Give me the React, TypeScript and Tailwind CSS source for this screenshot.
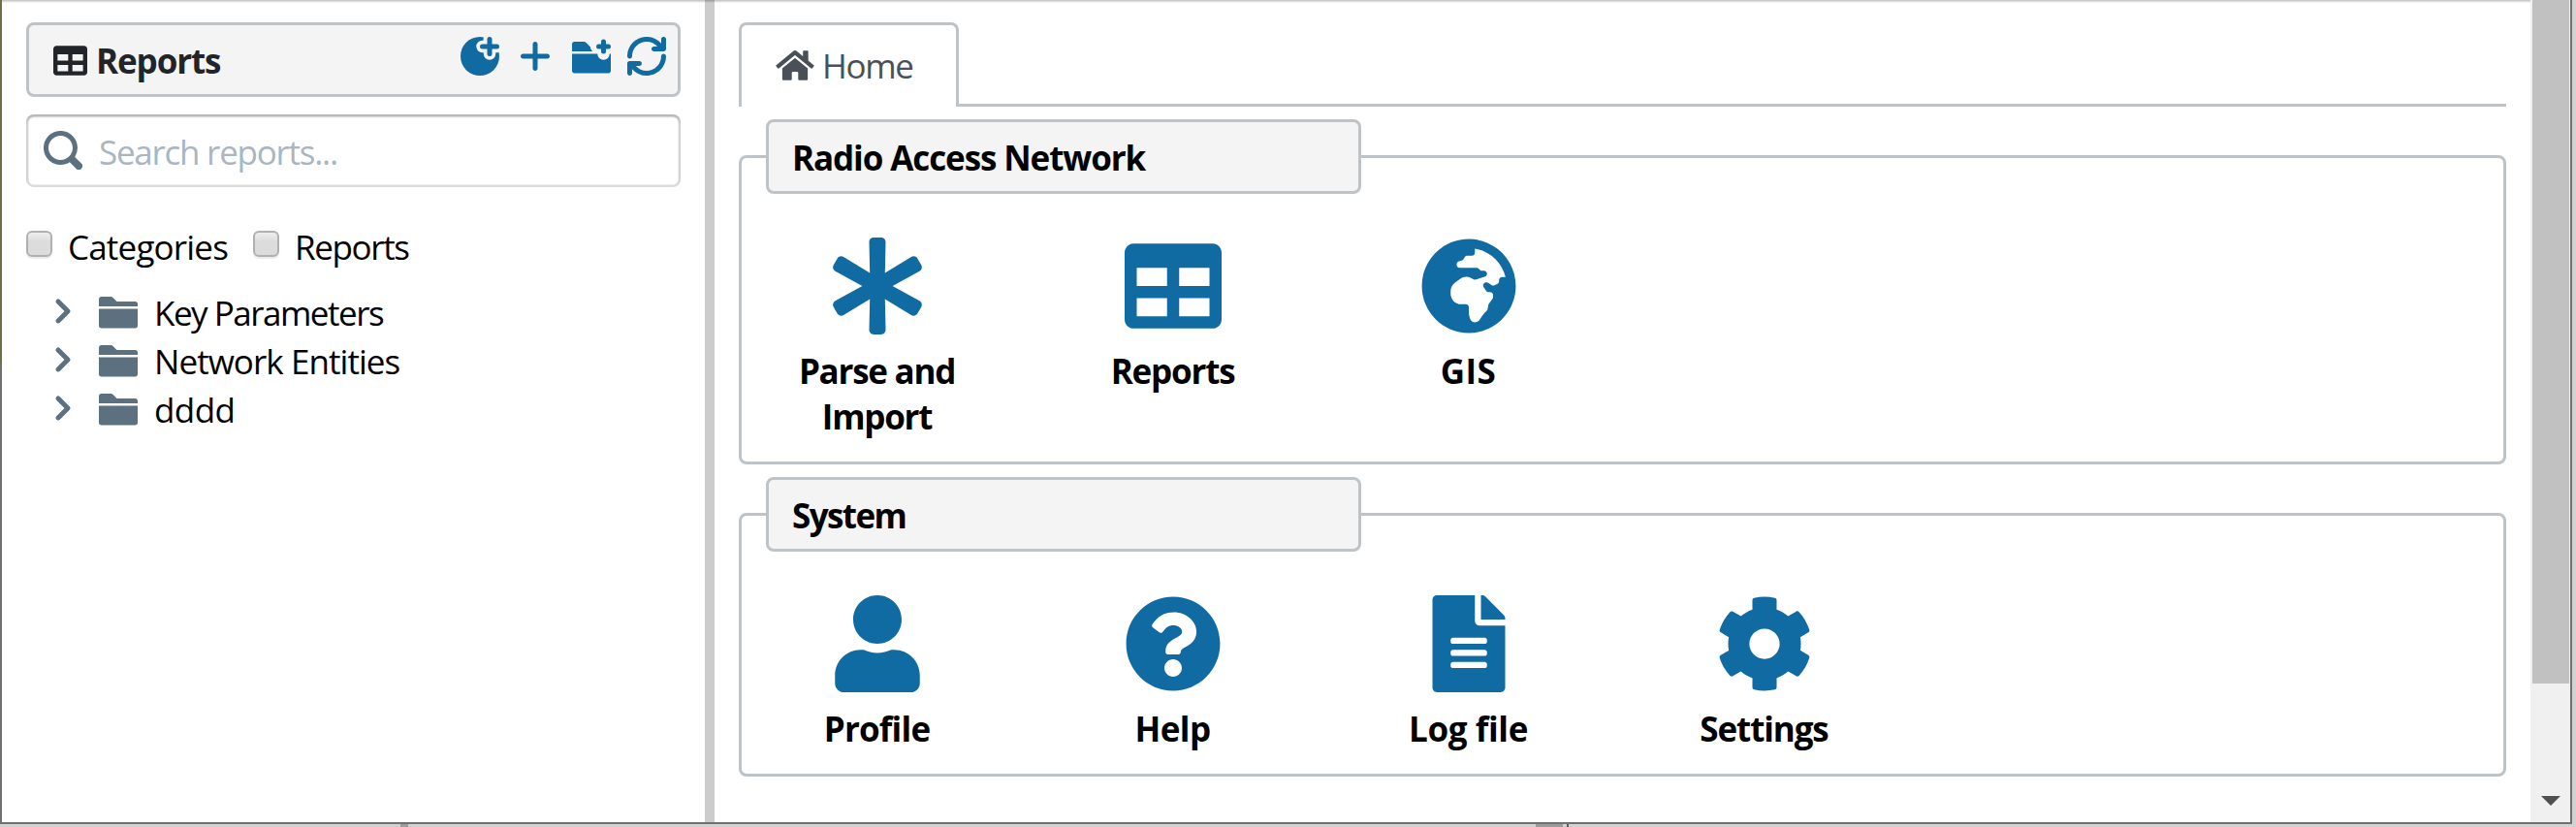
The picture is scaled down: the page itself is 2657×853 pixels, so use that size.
import type { ReactNode } from "react";
import {
  FaAsterisk,
  FaCog,
  FaFileAlt,
  FaGlobeAfrica,
  FaHome,
  FaQuestionCircle,
  FaTable,
  FaUser,
} from "react-icons/fa";

function Glyph({ d, className }: { d: string; className?: string }) {
  return (
    <svg viewBox="0 0 16 16" fill="currentColor" fillRule="evenodd" className={`block size-10 shrink-0 ${className ?? ""}`}>
      <path d={d} />
    </svg>
  );
}

const CHEVRON =
  "M10.71 7.29l-4-4a1.003 1.003 0 00-1.42 1.42L8.59 8 5.3 11.29c-.19.18-.3.43-.3.71a1.003 1.003 0 001.71.71l4-4c.18-.18.29-.43.29-.71 0-.28-.11-.53-.29-.71z";
const FOLDER =
  "M0 14c0 .55.45 1 1 1h14c.55 0 1-.45 1-1V7H0v7zm15-10H7.41L5.7 2.3A.965.965 0 005 2H1c-.55 0-1 .45-1 1v3h16V5c0-.55-.45-1-1-1z";
const PLUS =
  "M13 7H9V3c0-.55-.45-1-1-1s-1 .45-1 1v4H3c-.55 0-1 .45-1 1s.45 1 1 1h4v4c0 .55.45 1 1 1s1-.45 1-1V9h4c.55 0 1-.45 1-1s-.45-1-1-1z";
const REFRESH =
  "M14.99 6.99c-.55 0-1 .45-1 1 0 3.31-2.69 6-6 6-1.77 0-3.36-.78-4.46-2h1.46c.55 0 1-.45 1-1s-.45-1-1-1h-4c-.55 0-1 .45-1 1v4c0 .55.45 1 1 1s1-.45 1-1v-1.74a7.95 7.95 0 006 2.74c4.42 0 8-3.58 8-8 0-.55-.45-1-1-1zm0-7c-.55 0-1 .45-1 1v1.74a7.95 7.95 0 00-6-2.74c-4.42 0-8 3.58-8 8 0 .55.45 1 1 1s1-.45 1-1c0-3.31 2.69-6 6-6 1.77 0 3.36.78 4.46 2h-1.46c-.55 0-1 .45-1 1s.45 1 1 1h4c.55 0 1-.45 1-1v-4c0-.55-.45-1-1-1z";
const SEARCH =
  "M15.55 13.43l-2.67-2.68a6.94 6.94 0 001.11-3.76c0-3.87-3.13-7-7-7s-7 3.13-7 7 3.13 7 7 7c1.39 0 2.68-.42 3.76-1.11l2.68 2.67a1.498 1.498 0 102.12-2.12zm-8.56-1.44c-2.76 0-5-2.24-5-5s2.24-5 5-5 5 2.24 5 5-2.24 5-5 5z";

function NewObjectIcon() {
  return (
    <svg viewBox="0 0 16 16" className="block size-10 shrink-0" strokeLinecap="round">
      <mask id="object-cut" maskUnits="userSpaceOnUse" x="0" y="0" width="16" height="16">
        <rect width="16" height="16" fill="white" />
        <path d="M9 4h6M12 1v6" stroke="black" strokeWidth="5" />
        <rect x="9.5" y="0" width="6.5" height="2" fill="black" />
      </mask>
      <circle cx="8" cy="8" r="8" fill="currentColor" mask="url(#object-cut)" />
      <path d="M9 4h6M12 1v6" stroke="currentColor" strokeWidth="2" />
    </svg>
  );
}

function NewFolderIcon() {
  return (
    <svg viewBox="0 0 16 16" className="block size-10 shrink-0" strokeLinecap="round">
      <mask id="folder-cut" maskUnits="userSpaceOnUse" x="0" y="0" width="16" height="16">
        <rect width="16" height="16" fill="white" />
        <path d="M10 4h6M13 1v6" stroke="black" strokeWidth="5" />
      </mask>
      <path d={FOLDER} fill="currentColor" mask="url(#folder-cut)" />
      <path d="M11 4h4M13 2v4" stroke="currentColor" strokeWidth="2" />
    </svg>
  );
}

function Checkbox() {
  return (
    <span className="mt-[7px] block size-[27px] shrink-0 rounded-[6px] border-2 border-[#b0b0b0] bg-linear-to-b from-[#eeeeee] to-[#dcdcdc] to-40% shadow-[0_2px_1px_rgba(0,0,0,0.08)]" />
  );
}

function TreeRow({ label, tracking }: { label: string; tracking: string }) {
  return (
    <li className="flex h-[50px] pl-[18px] text-[#5c7080]">
      <Glyph d={CHEVRON} className="mt-[3px]" />
      <Glyph d={FOLDER} className="mt-[3px] ml-[17px]" />
      <span className={`mt-px ml-[17px] text-black ${tracking}`}>{label}</span>
    </li>
  );
}

function Tile({ icon, label, tracking }: { icon: ReactNode; label: string; tracking: string }) {
  return (
    <div className="flex w-[180px] flex-col items-center">
      <div className="text-[100px] text-[#106ba3]">{icon}</div>
      <div className={`mt-[14px] -ml-px text-center font-bold ${tracking}`}>{label}</div>
    </div>
  );
}

function Group({
  title,
  tracking,
  height,
  children,
}: {
  title: string;
  tracking: string;
  height: string;
  children: ReactNode;
}) {
  return (
    <section className={`mt-[50px] rounded-[8px] border-3 border-[#bdc3c7] ${height}`}>
      <h2
        className={`-mt-[40px] ml-[25px] h-[77px] w-[614px] rounded-[8px] border-3 border-[#bdc3c7] bg-[#f4f4f4] pt-[13px] pl-[24px] font-bold ${tracking}`}
      >
        {title}
      </h2>
      <div className="mt-[45px] flex gap-[125px] pl-[50px]">{children}</div>
    </section>
  );
}

export default function App() {
  return (
    <div className="flex h-[853px] w-[2657px] flex-col overflow-hidden bg-[#d2d2d2] font-['Open_Sans','Noto_Sans',sans-serif] text-[35px] leading-[47px] text-black">
      <div className="relative flex h-[850px] w-[2653px] border-r-2 border-b-2 border-[#707070] bg-white">
        <div className="w-[2px] shrink-0">
          <div className="h-[375px] bg-[#6f6f45]" />
          <div className="h-[473px] bg-[#707070]" />
        </div>

        <aside className="w-[725px] shrink-0 pt-[23px] pl-[25px]">
          <div className="flex h-[77px] w-[675px] rounded-[8px] border-3 border-[#bdc3c7] bg-[#f4f4f4] pr-[12px] pl-[25px] text-[#212529]">
            <div className="mt-[13px] flex h-[47px] items-center gap-[9px]">
              <FaTable className="size-[35px]" />
              <span className="font-bold tracking-[-1.1px]">Reports</span>
            </div>
            <div className="mt-[12px] ml-auto flex gap-[17.5px] text-[#106ba3]">
              <NewObjectIcon />
              <Glyph d={PLUS} />
              <NewFolderIcon />
              <Glyph d={REFRESH} />
            </div>
          </div>

          <div className="mt-[18px] flex h-[75px] w-[675px] rounded-[8px] bg-white pl-[18px] shadow-[inset_0_0_0_2.5px_rgba(16,22,26,0.15),inset_0_2.5px_2.5px_rgba(16,22,26,0.2)]">
            <Glyph d={SEARCH} className="mt-[17px] text-[#5c7080]" />
            <span className="mt-[15px] ml-[17px] tracking-[-1.26px] text-[#a9b6c1]">Search reports...</span>
          </div>

          <div className="mt-[38px] flex h-[47px]">
            <Checkbox />
            <span className="ml-[16px] w-[191px] tracking-[-0.81px]">Categories</span>
            <Checkbox />
            <span className="ml-[16px] tracking-[-1.38px]">Reports</span>
          </div>

          <ul className="mt-[20px]">
            <TreeRow label="Key Parameters" tracking="tracking-[-1.5px]" />
            <TreeRow label="Network Entities" tracking="tracking-[-0.94px]" />
            <TreeRow label="dddd" tracking="tracking-[-0.58px]" />
          </ul>
        </aside>

        <div className="w-[10px] shrink-0 bg-[#cccccc]" />

        <main className="w-[1873px] shrink-0 pt-[23px] pr-[25px] pl-[25px]">
          <div className="flex h-[87px]">
            <div className="flex w-[227px] items-center rounded-t-[8px] border-3 border-b-0 border-[#bdc3c7] pb-[1px] pl-[35px] text-[#495057]">
              <FaHome className="h-[35px] w-[40px]" />
              <span className="ml-2 tracking-[-1.32px]">Home</span>
            </div>
            <div className="flex-1 border-b-3 border-[#bdc3c7]" />
          </div>

          <Group title="Radio Access Network" tracking="tracking-[-1.1px]" height="h-[319px]">
            <Tile icon={<FaAsterisk />} label="Parse and Import" tracking="tracking-[-1.25px]" />
            <Tile icon={<FaTable />} label="Reports" tracking="tracking-[-1.2px]" />
            <Tile icon={<FaGlobeAfrica />} label="GIS" tracking="tracking-[0.5px]" />
          </Group>

          <Group title="System" tracking="tracking-[-1.59px]" height="h-[272px]">
            <Tile icon={<FaUser />} label="Profile" tracking="tracking-[-0.79px]" />
            <Tile icon={<FaQuestionCircle />} label="Help" tracking="tracking-[-0.55px]" />
            <Tile icon={<FaFileAlt />} label="Log file" tracking="tracking-[-0.36px]" />
            <Tile icon={<FaCog />} label="Settings" tracking="tracking-[-1.11px]" />
          </Group>
        </main>

        <div className="flex w-[41px] shrink-0 flex-col bg-[#f0f0f0] pr-[1px] pl-[2px]">
          <div className="h-[705px] bg-[#c1c1c1]" />
          <svg viewBox="0 0 20 10" className="mt-[116px] ml-[9px] h-[10px] w-[20px]" fill="#505050">
            <path d="M0 0h20L10 10z" />
          </svg>
        </div>

        <div className="absolute top-0 left-[2px] h-[3px] w-[2608px] bg-linear-to-b from-black/25 to-transparent" />
      </div>
      <div className="flex h-[3px]">
        <div className="ml-[413px] h-full w-[8px] bg-[#9c9c9c]" />
        <div className="ml-[1163px] h-full w-[28px] bg-[#9a9a9a]" />
        <div className="ml-[4px] h-full w-[2px] bg-[#5f5f5f]" />
      </div>
    </div>
  );
}
